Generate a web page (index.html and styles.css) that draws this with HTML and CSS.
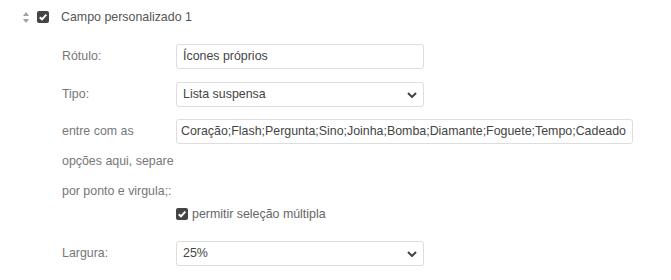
FILE: index.html
```html
<!DOCTYPE html>
<html lang="pt">
<head>
<meta charset="utf-8">
<link rel="stylesheet" href="styles.css">
</head>
<body>
<div class="panel">
  <div class="head">
    <svg class="sort" width="6" height="11" viewBox="0 0 6 11"><path d="M3 0 L6 4 L0 4 Z M0 7 L6 7 L3 11 Z" fill="#a0a0a0"/></svg>
    <span class="cb"><svg width="12" height="12" viewBox="0 0 12 12"><path d="M2.8 6.2 L5 8.4 L9.3 3.6" fill="none" stroke="#fff" stroke-width="2"/></svg></span>
    <span class="title">Campo personalizado 1</span>
  </div>
  <div class="fields">
    <div class="row r1">
      <div class="label">Rótulo:</div>
      <div class="ctl"><div class="input">Ícones próprios</div></div>
    </div>
    <div class="row r2">
      <div class="label">Tipo:</div>
      <div class="ctl"><div class="input select"><span>Lista suspensa</span><svg width="10" height="6" viewBox="0 0 10 6"><path d="M1 1 L5 5 L9 1" fill="none" stroke="#444" stroke-width="2"/></svg></div></div>
    </div>
    <div class="row r3">
      <div class="label multi">entre com as opções aqui, separe por ponto e virgula;:</div>
      <div class="ctl"><div class="input wide">Coração;Flash;Pergunta;Sino;Joinha;Bomba;Diamante;Foguete;Tempo;Cadeado</div></div>
    </div>
    <div class="row r4">
      <div class="label"></div>
      <div class="ctl check"><span class="cb"><svg width="12" height="12" viewBox="0 0 12 12"><path d="M2.8 6.2 L5 8.4 L9.3 3.6" fill="none" stroke="#fff" stroke-width="2"/></svg></span><span class="ctext">permitir seleção múltipla</span></div>
    </div>
    <div class="row r5">
      <div class="label">Largura:</div>
      <div class="ctl"><div class="input select"><span>25%</span><svg width="10" height="6" viewBox="0 0 10 6"><path d="M1 1 L5 5 L9 1" fill="none" stroke="#444" stroke-width="2"/></svg></div></div>
    </div>
  </div>
</div>
</body>
</html>
```
FILE: styles.css
```css
html, body {
  margin: 0;
  padding: 0;
  background: #fff;
}
body {
  font-family: "Liberation Sans", Arial, sans-serif;
  font-size: 12.4px;
  color: #555;
}
.panel {
  width: 671px;
  height: 280px;
}
.head {
  display: flex;
  align-items: center;
  height: 34px;
  padding-left: 23px;
}
.sort {
  display: block;
}
.cb {
  display: inline-flex;
  width: 12px;
  height: 12px;
  background: #444;
  border-radius: 2px;
}
.cb svg { display: block; }
.head .cb {
  margin-left: 8px;
}
.title {
  margin-left: 12px;
  color: #555;
}
.fields {
  padding-left: 62px;
  padding-top: 10px;
}
.row {
  display: flex;
  align-items: flex-start;
}
.label {
  width: 114px;
  flex: none;
  color: #777;
  line-height: 25px;
}
.label.multi {
  line-height: 30px;
  margin-top: -3px;
}
.input {
  box-sizing: border-box;
  width: 248px;
  height: 25px;
  border: 1px solid #ddd;
  border-radius: 3px;
  padding: 0 6px;
  line-height: 23px;
  color: #444;
  white-space: nowrap;
  overflow: hidden;
}
.input.wide {
  width: 457px;
  padding: 0 4px;
}
.select {
  display: flex;
  align-items: center;
  justify-content: space-between;
  padding-right: 6px;
}
.select svg { display: block; }
.r1 { margin-bottom: 13px; }
.r2 { margin-bottom: 12px; }
.r3 { margin-top: 1px; height: 80px; }
.r4 { margin-top: 6px; height: 18px; }
.check {
  display: flex;
  align-items: center;
  height: 18px;
}
.ctext {
  margin-left: 4px;
  color: #666;
}
.r5 { margin-top: 18px; }
```
